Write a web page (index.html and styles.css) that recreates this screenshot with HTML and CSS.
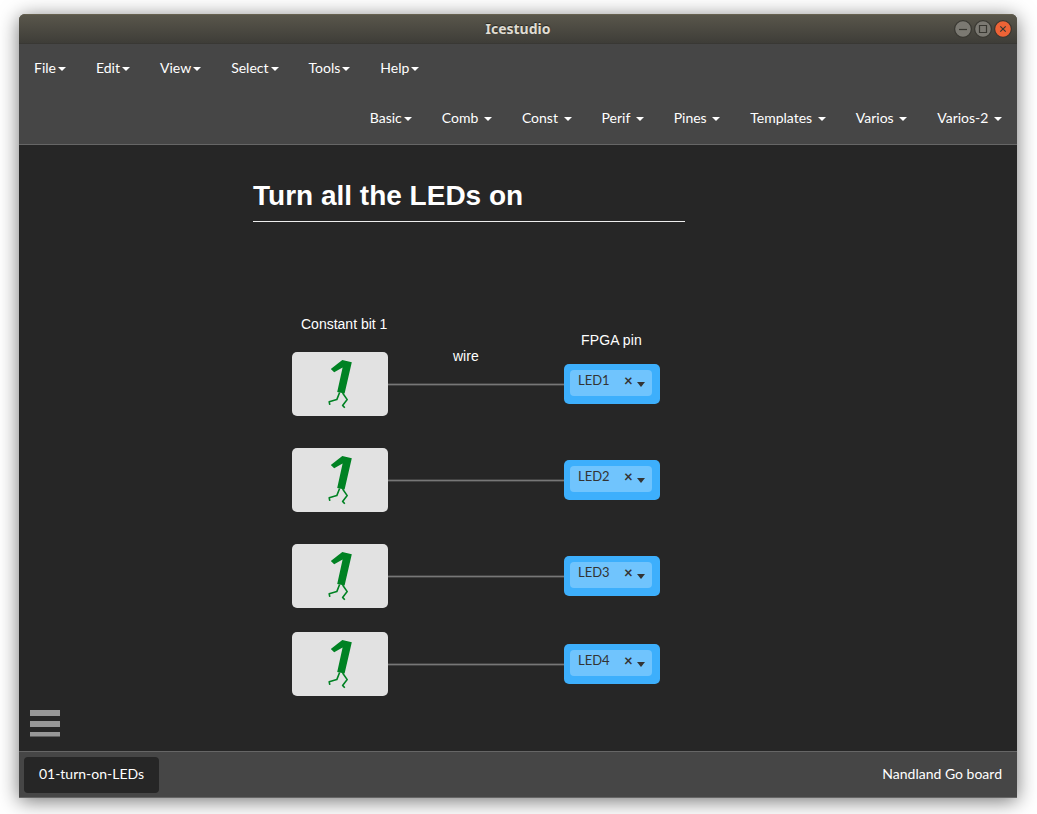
FILE: index.html
```
<!DOCTYPE html>
<html lang="en">
<head>
<meta charset="utf-8">
<title>Icestudio</title>
<link rel="stylesheet" href="styles.css">
</head>
<body>
<svg class="defs" width="0" height="0" aria-hidden="true">
  <symbol id="one" viewBox="0 0 96 64">
    <path fill="#008223" d="M50.3 8 59.8 10.2 52.6 41.5 45.2 40 50.6 15.6 42.2 20.2 38.8 17z"/>
    <path fill="none" stroke="#008223" stroke-width="1.6" stroke-linejoin="round" d="M47.6 40.5 44.8 47.6 37.2 49.8 37.8 52.8M50.6 41 55.2 47.6 50.6 53.4 52.8 55.8"/>
  </symbol>
</svg>
<div class="window">
  <header class="titlebar">
    <span class="title">Icestudio</span>
    <div class="controls">
      <svg class="control" viewBox="0 0 18 18"><circle cx="9" cy="9" r="8.4"/><path d="M5 9.5h8"/></svg>
      <svg class="control" viewBox="0 0 18 18"><circle cx="9" cy="9" r="8.4"/><path d="M5.5 5.5h7v7h-7z"/></svg>
      <svg class="control close" viewBox="0 0 18 18"><circle cx="9" cy="9" r="8.4"/><path d="M6.3 6.3l5.4 5.4M11.7 6.3l-5.4 5.4"/></svg>
    </div>
  </header>
  <div class="navbar">
    <nav class="menu">
      <a class="item">File<b class="caret"></b></a>
      <a class="item">Edit<b class="caret"></b></a>
      <a class="item">View<b class="caret"></b></a>
      <a class="item">Select<b class="caret"></b></a>
      <a class="item">Tools<b class="caret"></b></a>
      <a class="item">Help<b class="caret"></b></a>
    </nav>
    <nav class="menu menu-right">
      <a class="item">Basic<b class="caret"></b></a>
      <a class="item">Comb <b class="caret"></b></a>
      <a class="item">Const <b class="caret"></b></a>
      <a class="item">Perif <b class="caret"></b></a>
      <a class="item">Pines <b class="caret"></b></a>
      <a class="item">Templates <b class="caret"></b></a>
      <a class="item">Varios <b class="caret"></b></a>
      <a class="item">Varios-2 <b class="caret"></b></a>
    </nav>
  </div>
  <main class="canvas">
    <h1 class="heading">Turn all the LEDs on</h1>
    <span class="label label-constant">Constant bit 1</span>
    <span class="label label-wire">wire</span>
    <span class="label label-pin">FPGA pin</span>
    <div class="circuit row-1">
      <svg class="block"><use href="#one"/></svg><i class="wire"></i>
      <div class="pin"><div class="select"><span class="name">LED1</span><span class="clear">×</span><b class="arrow"></b></div></div>
    </div>
    <div class="circuit row-2">
      <svg class="block"><use href="#one"/></svg><i class="wire"></i>
      <div class="pin"><div class="select"><span class="name">LED2</span><span class="clear">×</span><b class="arrow"></b></div></div>
    </div>
    <div class="circuit row-3">
      <svg class="block"><use href="#one"/></svg><i class="wire"></i>
      <div class="pin"><div class="select"><span class="name">LED3</span><span class="clear">×</span><b class="arrow"></b></div></div>
    </div>
    <div class="circuit row-4">
      <svg class="block"><use href="#one"/></svg><i class="wire"></i>
      <div class="pin"><div class="select"><span class="name">LED4</span><span class="clear">×</span><b class="arrow"></b></div></div>
    </div>
    <svg class="burger" viewBox="0 0 30 27"><path d="M0 0h30v6H0zM0 11h30v6H0zM0 22h30v4.6H0z"/></svg>
  </main>
  <footer class="footer">
    <span class="tab">01-turn-on-LEDs</span>
    <span class="board">Nandland Go board</span>
  </footer>
</div>
</body>
</html>
```
FILE: styles.css
```
* { box-sizing: border-box; }
body {
  margin: 0;
  height: 814px;
  padding: 14px 20px 16px 19px;
  overflow: hidden;
  background: #fff;
  font: 14px/20px Lato, sans-serif;
  color: #fff;
}
.defs { position: absolute; }
.window {
  display: flex;
  flex-direction: column;
  height: 784px;
  border-radius: 6px 6px 0 0;
  background: #464646;
  box-shadow: 0 3px 20px rgba(0, 0, 0, .55);
}
.titlebar {
  display: grid;
  grid-template-columns: 1fr auto 1fr;
  align-items: center;
  height: 30px;
  padding: 0 5px;
  border-radius: 6px 6px 0 0;
  border-top: 1px solid #66614f;
  border-bottom: 1px solid #393834;
  background: linear-gradient(#59564b, #3e3d38);
}
.title {
  grid-column: 2;
  font: bold 14px/28px "Noto Sans", sans-serif;
  color: #dfdbd2;
  text-shadow: 0 -1px 1px #26251f;
}
.controls { display: flex; gap: 2px; justify-self: end; }
.control { width: 18px; height: 18px; fill: #7b7972; stroke: #383731; stroke-width: 1.2; }
.control path { fill: none; }
.close { fill: #ee6336; }
.navbar { height: 101px; border-bottom: 1px solid #666; }
.menu { display: flex; height: 50px; }
.menu-right { justify-content: flex-end; }
.item { padding: 14px 15px 16px; line-height: 20px; white-space: nowrap; }
.caret {
  display: inline-block;
  margin-left: 2px;
  vertical-align: middle;
  border: 4px solid transparent;
  border-top-color: #fff;
  border-bottom: 0;
}
.canvas { position: relative; flex: 1; background: #262626; font-family: "Liberation Sans", Arial, sans-serif; }
.heading {
  position: absolute;
  left: 234px;
  top: 34px;
  width: 432px;
  height: 43px;
  margin: 0;
  border-bottom: 1px solid #eee;
  font-size: 28px;
  line-height: 34px;
}
.label { position: absolute; line-height: 16px; white-space: nowrap; }
.label-constant { left: 282px; top: 171px; }
.label-wire { left: 434px; top: 203px; }
.label-pin { left: 562px; top: 187px; letter-spacing: .12px; }
.circuit { position: absolute; left: 273px; display: flex; align-items: center; width: 368px; height: 64px; }
.row-1 { top: 207px; }
.row-2 { top: 303px; }
.row-3 { top: 399px; }
.row-4 { top: 487px; }
.block { width: 96px; height: 64px; border-radius: 5px; background: #e2e2e2; }
.wire { flex: 1; height: 3px; margin-top: 1px; border: solid #434343; border-width: 1px 0; background: #777; }
.pin { width: 96px; height: 40px; padding: 6px 8px 8px 6px; border-radius: 5px; background: #3daffc; }
.select {
  display: flex;
  height: 26px;
  padding: 0 7px 0 8px;
  border-radius: 4px;
  background: #70c4fd;
  color: #333;
  font: 13px/20px Lato, sans-serif;
}
.name { width: 46px; }
.clear { width: 13px; font-size: 15px; font-weight: bold; }
.arrow { width: 8px; height: 5px; margin-top: 12px; background: #333; clip-path: polygon(0 0, 100% 0, 50% 100%); }
.burger { position: absolute; left: 11px; top: 565px; width: 30px; height: 27px; fill: #979797; }
.footer {
  display: flex;
  align-items: flex-start;
  justify-content: space-between;
  height: 47px;
  padding: 5px 15px 0 5px;
  border-top: 1px solid #666;
  border-bottom: 1px solid #666;
  line-height: 34px;
}
.tab { width: 135px; height: 36px; border-radius: 4px; background: #262626; text-align: center; }
```
